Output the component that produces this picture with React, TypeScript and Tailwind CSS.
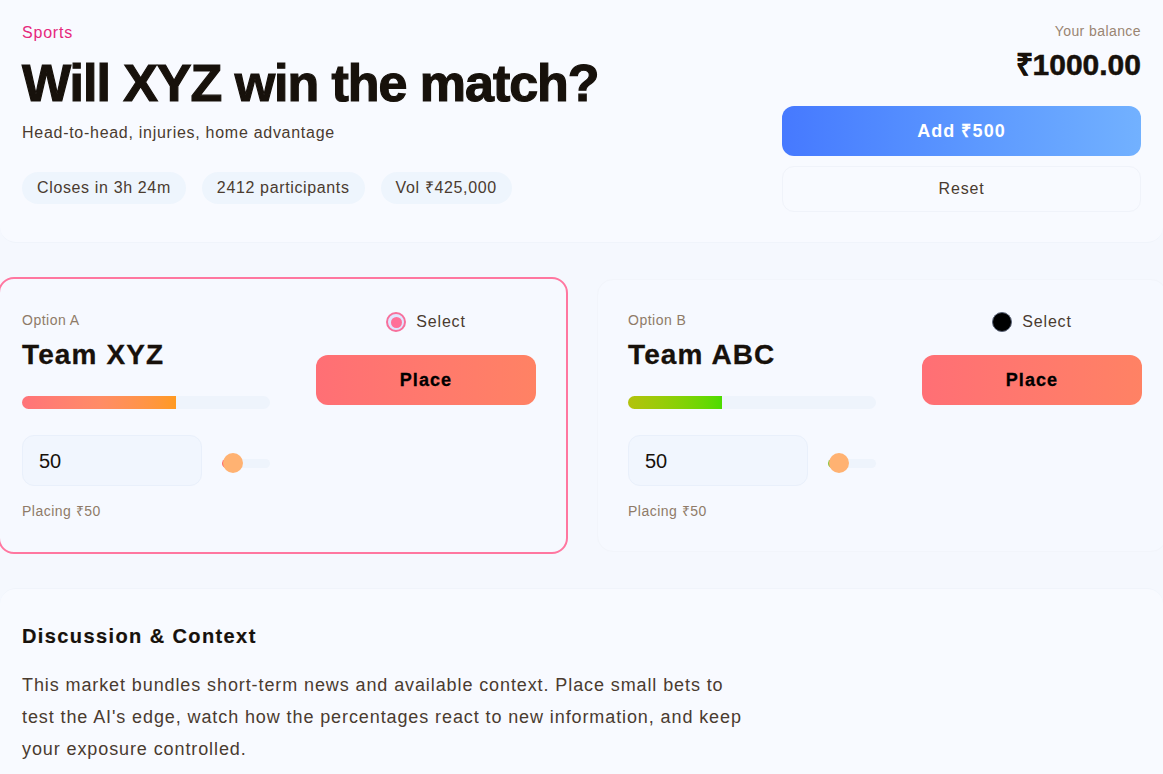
import React from "react";

const font = "font-['Liberation_Sans',Arial,sans-serif]";

const Chip = ({ children }: { children: React.ReactNode }) => (
  <span className="rounded-full bg-[#eef5fd] px-[15px] py-1 text-base leading-6 tracking-[0.04em] text-[#4a3b2f]">
    {children}
  </span>
);

type OptionProps = {
  label: string;
  team: string;
  pct: number;
  barClass: string;
  sliverClass: string;
  selected?: boolean;
};

const OptionCard = ({ label, team, pct, barClass, sliverClass, selected }: OptionProps) => {
  return (
    <div
      className={
        selected
          ? "w-[570px] shrink-0 rounded-2xl border-2 border-[#ff77a0] bg-[#f6f9ff] pt-[31px] pb-[31px] pl-[22px]"
          : "w-[570px] shrink-0 rounded-2xl border border-[#f2f5fb] bg-[#f6f9ff] pt-[30px] pb-[30px] pl-[30px]"
      }
    >
      <div className="flex items-start gap-[46px]">
        {/* left column */}
        <div className="w-[248px]">
          <p className="text-sm leading-5 tracking-[0.035em] text-[#8f7b68]">{label}</p>
          <p className="mt-[7px] text-[28px] leading-9 font-bold tracking-[0.04em] text-[#17110b] [-webkit-text-stroke:0.3px_#17110b]">
            {team}
          </p>
          <div className="mt-[23px] h-[13px] w-full overflow-hidden rounded-full bg-[#eef4fc]">
            <div className={`h-full ${barClass}`} style={{ width: `${pct}%` }} />
          </div>
          <div className="mt-[26px] flex items-center gap-5">
            <div className="flex h-[51px] w-[180px] items-center rounded-xl border border-[#e9f0fb] bg-[#f1f6fe] pl-4 text-xl text-[#17110b]">
              50
            </div>
            <div className="relative mt-[5px] h-[9px] flex-1 rounded-full bg-[#eef4fc]">
              <div className={`h-full w-[5px] rounded-l-full ${sliverClass}`} />
              <div className="absolute top-1/2 left-[1px] h-5 w-5 -translate-y-1/2 rounded-full bg-[#ffb272]" />
            </div>
          </div>
          <p className="mt-[15px] text-sm leading-5 tracking-[0.035em] text-[#8f7b68]">Placing ₹50</p>
        </div>

        {/* right column */}
        <div className="flex w-[220px] flex-col items-center">
          <div className="flex h-6 items-center gap-[10px]">
            {selected ? (
              <span className="flex h-5 w-5 items-center justify-center rounded-full border-2 border-[#f7709c] bg-[#dfe6ff]">
                <span className="h-[11px] w-[11px] rounded-full bg-[#ff6f98]" />
              </span>
            ) : (
              <span className="h-5 w-5 rounded-full border border-[#5b6478] bg-black" />
            )}
            <span className="text-base tracking-[0.05em] text-[#4a3b2f]">Select</span>
          </div>
          <button className="mt-[21px] h-[50px] w-full rounded-xl bg-gradient-to-r from-[#ff6f75] to-[#ff8264] text-lg font-bold tracking-[0.06em] text-black [-webkit-text-stroke:0.3px_#000]">
            Place
          </button>
        </div>
      </div>
    </div>
  );
};

export default function App() {
  return (
    <div className={`min-h-screen w-full overflow-hidden bg-[#f5f8fe] ${font}`}>
      {/* Header */}
      <header className="flex justify-between rounded-b-2xl border-b border-[#f0f4fb] bg-[#f8faff] px-[22px] pt-[21px] pb-[30px]">
        <div>
          <p className="text-base leading-6 tracking-[0.05em] text-[#e6287c]">Sports</p>
          <h1 className="mt-[8px] text-[52px] leading-[60px] font-bold tracking-[-0.02em] text-[#17110b] [-webkit-text-stroke:1.2px_#17110b]">
            Will XYZ win the match?
          </h1>
          <p className="mt-[8px] text-base leading-6 tracking-[0.045em] text-[#4a3b2f]">
            Head-to-head, injuries, home advantage
          </p>
          <div className="mt-[27px] flex gap-4">
            <Chip>Closes in 3h 24m</Chip>
            <Chip>2412 participants</Chip>
            <Chip>Vol ₹425,000</Chip>
          </div>
        </div>

        <div className="flex w-[359px] flex-col items-end">
          <p className="text-sm leading-5 tracking-[0.03em] text-[#9a8572]">Your balance</p>
          <p className="mt-[6px] text-3xl leading-9 font-bold text-[#17110b] [-webkit-text-stroke:0.5px_#17110b]">
            ₹1000.00
          </p>
          <button className="mt-[23px] h-[50px] w-full rounded-xl bg-gradient-to-r from-[#4679ff] to-[#72b1ff] text-lg font-bold tracking-[0.06em] text-white">
            Add ₹500
          </button>
          <button className="mt-[10px] h-[46px] w-full rounded-xl border border-[#f0f3fa] bg-[#f8faff] text-base tracking-[0.05em] text-[#4a3b2f]">
            Reset
          </button>
        </div>
      </header>

      {/* Options */}
      <div className="mt-[34px] -ml-[2px] flex items-center gap-[29px]">
        <OptionCard
          label="Option A"
          team="Team XYZ"
          pct={62}
          barClass="bg-gradient-to-r from-[#ff7379] via-[#ff8c66] to-[#ff9a20]"
          sliverClass="bg-[#ff6b6b]"
          selected
        />
        <OptionCard
          label="Option B"
          team="Team ABC"
          pct={38}
          barClass="bg-gradient-to-r from-[#b3c20d] to-[#4bdc00]"
          sliverClass="bg-[#8cc63f]"
        />
      </div>

      {/* Discussion */}
      <section className="mt-[34px] rounded-t-2xl border-t border-[#f0f4fb] bg-[#f8faff] px-[22px] pt-[33px] pb-10">
        <h2 className="text-xl leading-7 font-bold tracking-[0.07em] text-[#17110b] [-webkit-text-stroke:0.2px_#17110b]">
          Discussion &amp; Context
        </h2>
        <p className="mt-[19px] max-w-[728px] text-lg leading-8 tracking-[0.05em] text-[#4a3b2f]">
          This market bundles short-term news and available context. Place small bets to test the AI's edge, watch
          how the percentages react to new information, and keep your exposure controlled.
        </p>
      </section>
    </div>
  );
}
